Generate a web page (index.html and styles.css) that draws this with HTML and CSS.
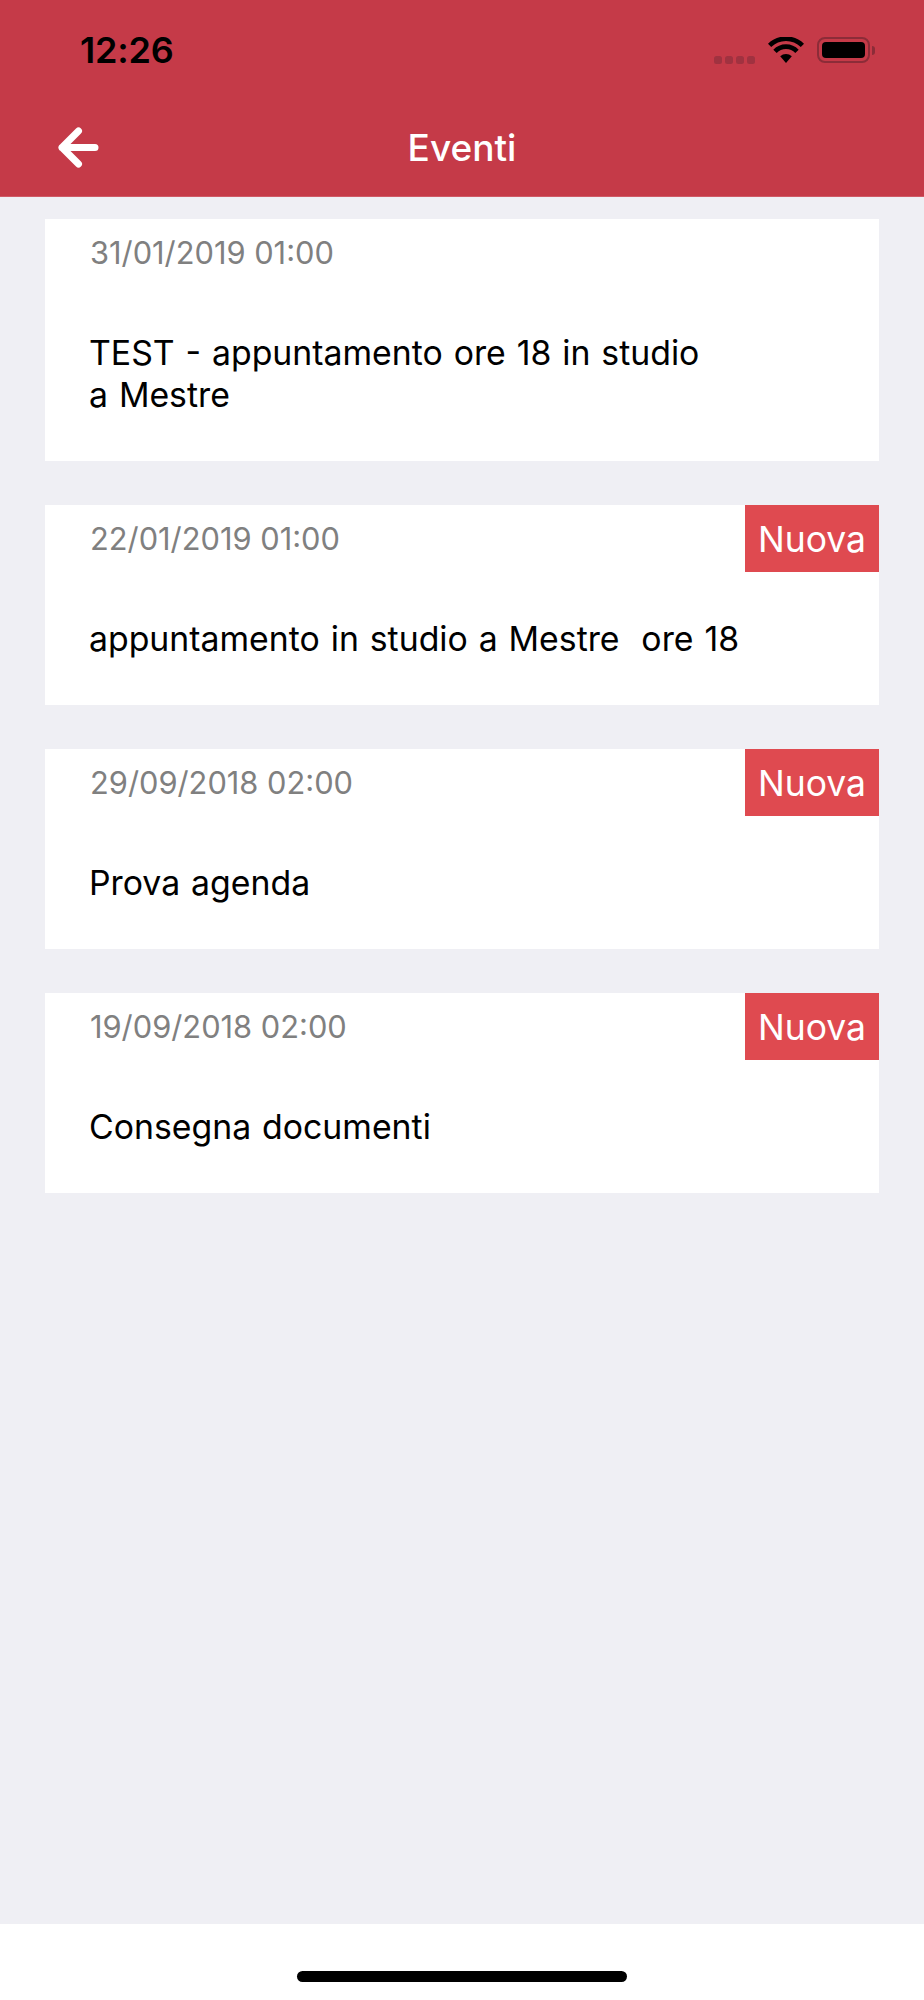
FILE: index.html
```html
<!DOCTYPE html>
<html lang="it">
<head>
<meta charset="utf-8">
<title>Eventi</title>
<link rel="stylesheet" href="styles.css">
</head>
<body>
<div class="screen">
  <header class="header">
    <div class="status">
      <span class="time">12:26</span>
      <div class="status-icons">
        <div class="signal"><i></i><i></i><i></i><i></i></div>
        <svg class="wifi" width="36" height="26" viewBox="0 0 36 26">
          <path d="M18 26 L12.2 19.2 A8.4 8.4 0 0 1 23.8 19.2 Z" fill="#000"/>
          <path d="M7 14.4 A15 15 0 0 1 29 14.4" fill="none" stroke="#000" stroke-width="4.6"/>
          <path d="M1.6 8.4 A23.4 23.4 0 0 1 34.4 8.4" fill="none" stroke="#000" stroke-width="4.6"/>
        </svg>
        <div class="battery"><div class="battery-fill"></div></div>
        <div class="battery-nub"></div>
      </div>
    </div>
    <div class="navbar">
      <svg class="back" width="41" height="41" viewBox="0 0 41 41">
        <path d="M20.5 4 L4 20.5 L20.5 37 M4 20.5 H37" fill="none" stroke="#fff" stroke-width="7" stroke-linecap="round" stroke-linejoin="round"/>
      </svg>
      <h1 class="title">Eventi</h1>
    </div>
  </header>

  <main class="list">
    <article class="card">
      <div class="date">31/01/2019 01:00</div>
      <p class="text">TEST - appuntamento ore 18 in studio<br>a Mestre</p>
    </article>
    <article class="card">
      <span class="badge">Nuova</span>
      <div class="date">22/01/2019 01:00</div>
      <p class="text">appuntamento in studio a Mestre  ore 18</p>
    </article>
    <article class="card">
      <span class="badge">Nuova</span>
      <div class="date">29/09/2018 02:00</div>
      <p class="text">Prova agenda</p>
    </article>
    <article class="card">
      <span class="badge">Nuova</span>
      <div class="date">19/09/2018 02:00</div>
      <p class="text">Consegna documenti</p>
    </article>
  </main>

  <footer class="home-bar"><div class="home-indicator"></div></footer>
</div>
</body>
</html>
```

FILE: styles.css
```css
* { box-sizing: border-box; }
html, body { margin: 0; padding: 0; }
body { font-family: "Inter", "Liberation Sans", sans-serif; background: #efeff4; }

.screen { width: 924px; height: 2000px; display: flex; flex-direction: column; }

.header { height: 197px; background: #c53a48; border-bottom: 1px solid #cf5a66; flex: none; }
.status { height: 100px; padding: 30px 49px 0 80px; display: flex; justify-content: space-between; align-items: flex-start; }
.time { font-size: 36px; font-weight: 600; line-height: 40px; color: #000; letter-spacing: -0.2px; }
.status-icons { display: flex; align-items: flex-start; padding-top: 7px; }
.signal { display: flex; gap: 3px; margin-top: 19px; margin-right: 13px; }
.signal i { display: block; width: 8px; height: 7.5px; border-radius: 2.5px; background: #a03240; }
.wifi { display: block; margin-right: 13px; }
.battery { width: 53px; height: 26px; border: 2.5px solid #8c2c38; border-radius: 8px; padding: 3px; }
.battery-fill { width: 100%; height: 100%; background: #000; border-radius: 4px; }
.battery-nub { width: 3px; height: 9px; margin: 9px 0 0 2px; background: #8c2c38; border-radius: 0 3px 3px 0; }

.navbar { height: 96px; position: relative; display: flex; justify-content: center; align-items: center; }
.back { position: absolute; left: 58px; top: 27px; }
.title { margin: 0; font-size: 37px; font-weight: 500; color: #fff; line-height: 44px; }

.list { flex: 1; padding: 22px 45px 0; display: flex; flex-direction: column; gap: 44px; }
.card { position: relative; background: #fff; padding: 13px 45px 45px; }
.date { font-size: 30.8px; line-height: 42px; color: #808080; }
.text { margin: 58px 0 0 -1px; font-size: 33.8px; word-spacing: 1.4px; line-height: 42px; color: #000; white-space: pre-wrap; }
.badge { position: absolute; top: 0; right: 0; width: 134px; height: 67px; background: #df4a50; color: #fff; font-size: 35.5px; line-height: 69px; text-align: center; }

.home-bar { height: 76px; background: #fff; flex: none; display: flex; justify-content: center; padding-top: 47px; }
.home-indicator { width: 330px; height: 11px; background: #000; border-radius: 6px; }
```
